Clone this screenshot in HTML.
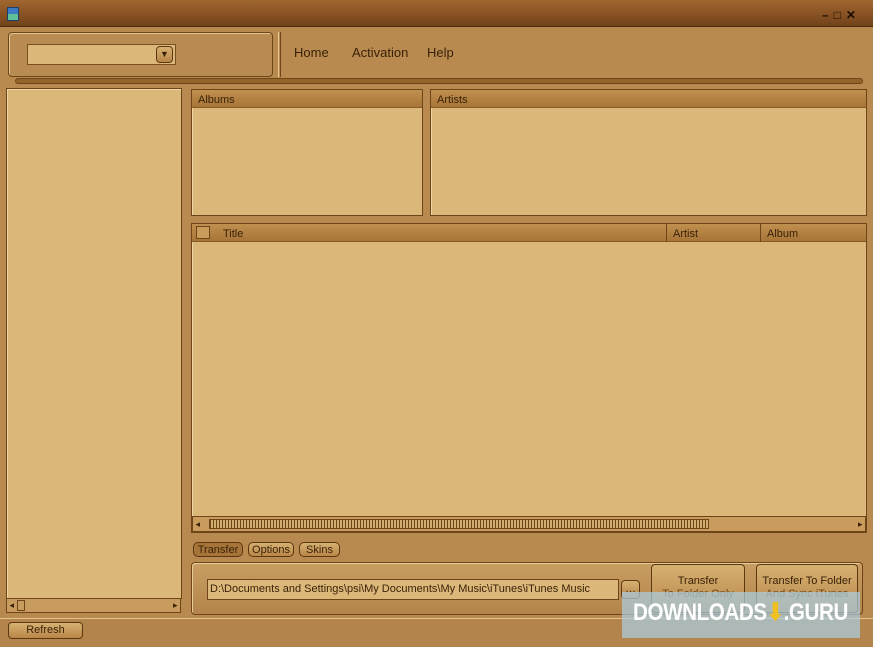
<!DOCTYPE html>
<html><head><meta charset="utf-8"><style>
*{margin:0;padding:0;box-sizing:border-box}
body{width:873px;height:647px;overflow:hidden;background:#b98a4f;font-family:"Liberation Sans",sans-serif;font-size:11px;color:#3a2208;position:relative}
.a{position:absolute}
.panel{background:#dbb87a;border:1px solid #6e4518;box-shadow:inset 1px 1px 0 #f0d6a2}
.hdr{background:linear-gradient(#c0904f,#a87538);border-bottom:1px solid #8a5a26;height:18px;line-height:20px;padding-left:6px;color:#3a2208}
.btn{background:linear-gradient(#d6b172,#b88648);border:1px solid #5c3812;border-radius:4px;text-align:center}
</style></head><body>
<div class="a" style="left:0;top:0;width:873px;height:27px;background:linear-gradient(#a0672f,#8a5424 50%,#70431a);border-bottom:1px solid #4a2a0c"></div>
<div class="a" style="left:7px;top:7px;width:12px;height:14px;background:linear-gradient(#3d7bc4 50%,#5fc09a 50%);border:1px solid #1d3f6a"></div>
<div class="a" style="left:822px;top:8px;color:#1a0d02;font-size:12px;font-weight:bold;letter-spacing:5px">–□✕</div>
<div class="a" style="left:8px;top:32px;width:265px;height:45px;border:1px solid #6e4518;border-radius:4px;box-shadow:inset 1px 1px 0 #e2c48e;background:#b78b52"></div>
<div class="a" style="left:278px;top:32px;width:3px;height:45px;border-left:1px solid #e6c894;border-right:1px solid #6e4518"></div>
<div class="a" style="left:27px;top:44px;width:149px;height:21px;background:#dbb87a;border:1px solid #7a4e20"></div>
<div class="a btn" style="left:156px;top:46px;width:17px;height:17px;line-height:14px;font-size:9px">▼</div>
<div class="a" style="left:294px;top:45px;font-size:13px;color:#3a2208">Home</div>
<div class="a" style="left:352px;top:45px;font-size:13px;color:#3a2208">Activation</div>
<div class="a" style="left:427px;top:45px;font-size:13px;color:#3a2208">Help</div>
<div class="a" style="left:15px;top:78px;width:848px;height:6px;background:#946428;border:1px solid #6e4518;border-radius:3px"></div>
<div class="a panel" style="left:6px;top:88px;width:176px;height:511px"></div>
<div class="a" style="left:6px;top:598px;width:175px;height:15px;background:#c79c5e;border:1px solid #6e4518;font-size:9px;line-height:13px">&nbsp;◂ <span style="display:inline-block;width:8px;height:11px;border:1px solid #6e4518;vertical-align:middle"></span><span style="float:right">▸&nbsp;</span></div>
<div class="a panel" style="left:191px;top:89px;width:232px;height:127px"><div class="hdr">Albums</div></div>
<div class="a panel" style="left:430px;top:89px;width:437px;height:127px"><div class="hdr">Artists</div></div>
<div class="a panel" style="left:191px;top:223px;width:676px;height:310px">
<div class="hdr" style="padding:0;position:relative"><span class="a" style="left:4px;top:2px;width:14px;height:13px;border:1px solid #6e4518;background:#c99c5c"></span><span class="a" style="left:31px">Title</span><span class="a" style="left:474px;border-left:1px solid #6e4518;padding-left:6px;height:18px">Artist</span><span class="a" style="left:568px;border-left:1px solid #6e4518;padding-left:6px;height:18px">Album</span></div>
</div>
<div class="a" style="left:192px;top:516px;width:674px;height:16px;background:#c99c5e;border:1px solid #6e4518;font-size:9px;line-height:14px">&nbsp;◂<span class="a" style="left:16px;top:2px;width:500px;height:10px;background:repeating-linear-gradient(90deg,#6e4518 0 1px,#d2ad70 1px 3px);border:1px solid #6e4518"></span><span style="float:right">▸&nbsp;</span></div>
<div class="a btn" style="left:193px;top:542px;width:50px;height:15px;line-height:15px;border-radius:5px;background:#a67438">Transfer</div>
<div class="a btn" style="left:248px;top:542px;width:46px;height:15px;line-height:15px;border-radius:5px">Options</div>
<div class="a btn" style="left:299px;top:542px;width:41px;height:15px;line-height:15px;border-radius:5px">Skins</div>
<div class="a" style="left:191px;top:562px;width:672px;height:53px;border:1px solid #6e4518;border-radius:4px;background:linear-gradient(#c99e62,#b3844b);box-shadow:inset 1px 1px 0 #e8cc98"></div>
<div class="a" style="left:207px;top:579px;width:412px;height:21px;background:#dbb87a;border:1px solid #6e4518;line-height:19px;padding-left:2px">D:\Documents and Settings\psi\My Documents\My Music\iTunes\iTunes Music</div>
<div class="a btn" style="left:621px;top:580px;width:19px;height:19px;line-height:17px">…</div>
<div class="a btn" style="left:651px;top:564px;width:94px;height:49px;padding-top:10px;line-height:13px">Transfer<br><span style="color:#6e4a20">To Folder Only</span></div>
<div class="a btn" style="left:756px;top:564px;width:102px;height:49px;padding-top:10px;line-height:13px">Transfer To Folder<br><span style="color:#6e4a20">And Sync iTunes</span></div>
<div class="a" style="left:0;top:618px;width:873px;height:29px;background:#b3844b;border-top:1px solid #e2c48e"></div>
<div class="a btn" style="left:8px;top:622px;width:75px;height:17px;line-height:15px">Refresh</div>
<div class="a" style="left:622px;top:592px;width:238px;height:46px;background:rgba(170,205,225,0.72)"></div>
<div class="a" style="left:633px;top:598px;font-size:24px;font-weight:bold;color:#fff;letter-spacing:-0.5px;transform:scaleX(0.86);transform-origin:left">DOWNLOADS<span style="color:#f0c020">⬇</span>.GURU</div>
</body></html>
